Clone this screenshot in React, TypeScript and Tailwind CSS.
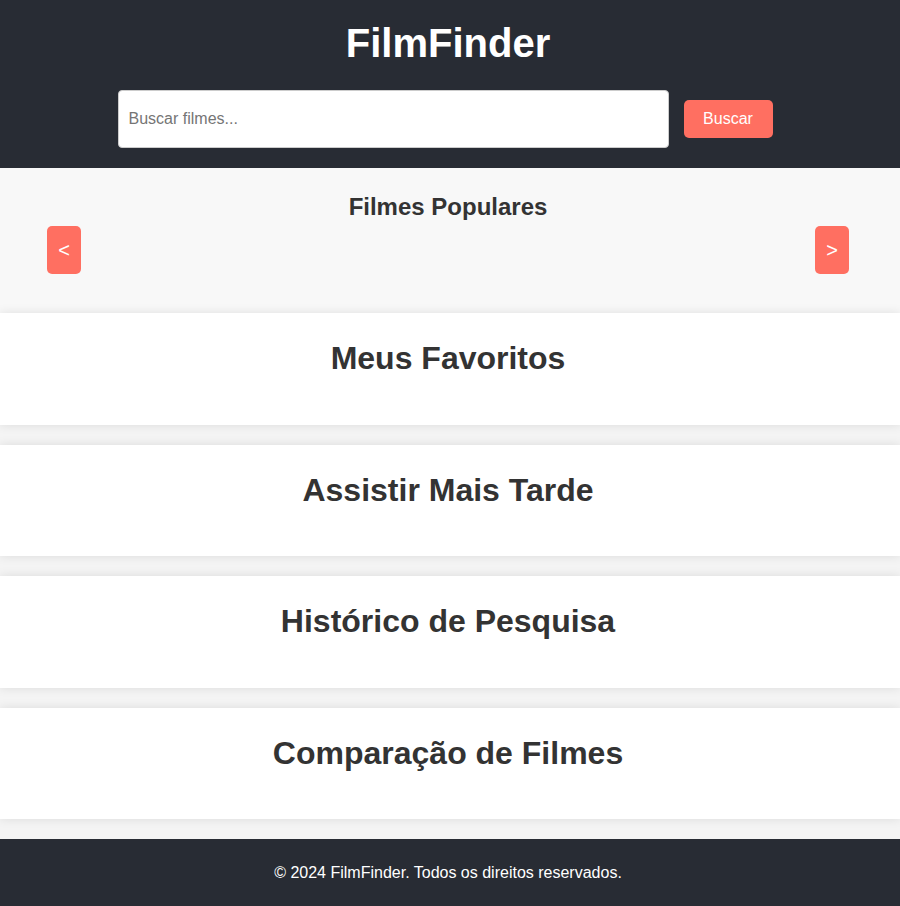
import React from "react";

const sections = [
  "Meus Favoritos",
  "Assistir Mais Tarde",
  "Histórico de Pesquisa",
  "Comparação de Filmes",
];

const App = () => {
  return (
    <div className="min-h-[906px] bg-[#f4f4f4] text-[#333] font-['Liberation_Sans',Arial,sans-serif]">
      {/* Cabeçalho */}
      <header className="bg-[#282c34] pt-[19px] pb-[20px] pr-[4px] text-center text-white">
        <h1 className="text-[40px] font-bold leading-[48px]">FilmFinder</h1>
        <div className="mt-[23px] flex items-center justify-center gap-[15px] pr-[6px]">
          <input
            type="text"
            placeholder="Buscar filmes..."
            className="h-[58px] w-[551px] rounded-[4px] border border-[#ccc] bg-white px-[10px] text-[16px] text-[#333] placeholder:text-[#757575] outline-none"
          />
          <button className="h-[38px] w-[89px] rounded-[5px] bg-[#ff6f61] text-[16px] text-white">
            Buscar
          </button>
        </div>
      </header>

      {/* Filmes populares */}
      <section className="bg-[#f8f8f8] pt-[25px] pb-[39px] pr-[4px]">
        <h2 className="text-center text-[24px] font-bold leading-[28px]">Filmes Populares</h2>
        <div className="mt-[5px] flex items-center justify-between px-[47px]">
          <button className="h-[48px] w-[34px] rounded-[5px] bg-[#ff6f61] text-[20px] text-white">&lt;</button>
          <button className="h-[48px] w-[34px] rounded-[5px] bg-[#ff6f61] text-[20px] text-white">&gt;</button>
        </div>
      </section>

      {/* Listas */}
      <main className="flex flex-col gap-[20px]">
        {sections.map((title) => (
          <section
            key={title}
            className="h-[111.5px] bg-white pt-[27px] pr-[4px] shadow-[0_0_10px_rgba(0,0,0,0.1)]"
          >
            <h2 className="text-center text-[32px] font-bold leading-[37px]">{title}</h2>
          </section>
        ))}
      </main>

      <footer className="mt-[20px] flex h-[67px] items-center justify-center bg-[#282c34] pr-[4px] text-[16px] text-white">
        © 2024 FilmFinder. Todos os direitos reservados.
      </footer>
    </div>
  );
};

export default App;
